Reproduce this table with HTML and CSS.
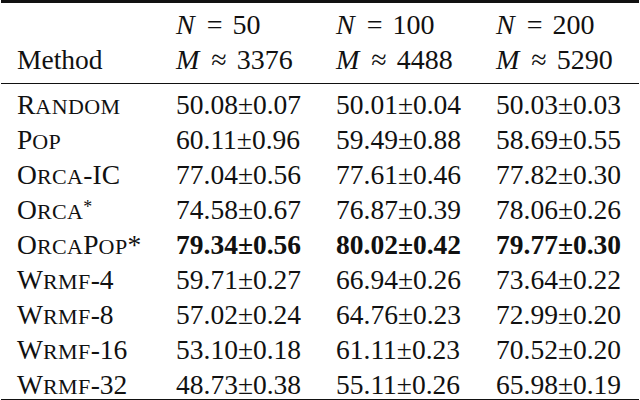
FILE: index.html
```html
<!DOCTYPE html>
<html lang="en">
<head>
    <meta charset="UTF-8">
    <meta name="viewport" content="width=device-width, initial-scale=1.0">
    <title>Method comparison</title>
    <link rel="stylesheet" href="styles.css">
</head>
<body>
    <table class="results">
        <colgroup>
            <col class="col-method">
            <col class="col-value">
            <col class="col-value">
            <col class="col-last">
        </colgroup>
        <thead>
            <tr class="head-top">
                <th class="method"></th>
                <th><i>N</i><span class="op">=</span>50</th>
                <th><i>N</i><span class="op">=</span>100</th>
                <th><i>N</i><span class="op">=</span>200</th>
            </tr>
            <tr class="head-bottom">
                <th class="method">Method</th>
                <th><i>M</i><span class="op">≈</span>3376</th>
                <th><i>M</i><span class="op">≈</span>4488</th>
                <th><i>M</i><span class="op">≈</span>5290</th>
            </tr>
        </thead>
        <tbody>
            <tr class="first">
                <td class="method">R<span class="sc">ANDOM</span></td>
                <td>50.08±0.07</td>
                <td>50.01±0.04</td>
                <td>50.03±0.03</td>
            </tr>
            <tr>
                <td class="method">P<span class="sc">OP</span></td>
                <td>60.11±0.96</td>
                <td>59.49±0.88</td>
                <td>58.69±0.55</td>
            </tr>
            <tr>
                <td class="method">O<span class="sc">RCA</span>-IC</td>
                <td>77.04±0.56</td>
                <td>77.61±0.46</td>
                <td>77.82±0.30</td>
            </tr>
            <tr>
                <td class="method">O<span class="sc">RCA</span><sup>*</sup></td>
                <td>74.58±0.67</td>
                <td>76.87±0.39</td>
                <td>78.06±0.26</td>
            </tr>
            <tr class="best">
                <td class="method">O<span class="sc">RCA</span>P<span class="sc">OP</span>*</td>
                <td>79.34±0.56</td>
                <td>80.02±0.42</td>
                <td>79.77±0.30</td>
            </tr>
            <tr>
                <td class="method">W<span class="sc">RMF</span>-4</td>
                <td>59.71±0.27</td>
                <td>66.94±0.26</td>
                <td>73.64±0.22</td>
            </tr>
            <tr>
                <td class="method">W<span class="sc">RMF</span>-8</td>
                <td>57.02±0.24</td>
                <td>64.76±0.23</td>
                <td>72.99±0.20</td>
            </tr>
            <tr>
                <td class="method">W<span class="sc">RMF</span>-16</td>
                <td>53.10±0.18</td>
                <td>61.11±0.23</td>
                <td>70.52±0.20</td>
            </tr>
            <tr class="last">
                <td class="method">W<span class="sc">RMF</span>-32</td>
                <td>48.73±0.38</td>
                <td>55.11±0.26</td>
                <td>65.98±0.19</td>
            </tr>
        </tbody>
    </table>
</body>
</html>
```

FILE: styles.css
```css
* {
    margin: 0;
    padding: 0;
    box-sizing: border-box;
}

body {
    background: white;
    color: #111;
    font-family: "Liberation Serif", "Times New Roman", serif;
    font-size: 27.5px;
}

.results {
    width: 638px;
    margin: 0 1px;
    table-layout: fixed;
    border-collapse: collapse;
    border-top: 3px solid #111;
    border-bottom: 2px solid #111;
}

.col-method {
    width: 175px;
}

.col-value {
    width: 160px;
}

.col-last {
    width: 143px;
}

.results th,
.results td {
    text-align: left;
    font-weight: normal;
    white-space: nowrap;
    padding: 0;
    height: 34.9px;
    line-height: 34.9px;
}

.results .method {
    padding-left: 16px;
}

.head-top th {
    padding-top: 5px;
    height: 39px;
}

.head-bottom th {
    height: 39px;
    padding-bottom: 5px;
    border-bottom: 1px solid #111;
}

.results thead th:not(.method) {
    font-size: 28px;
}

.results i {
    font-style: italic;
}

.op {
    padding: 0 10px 0 12px;
}

.sc {
    font-size: 0.8em;
    line-height: 1;
    letter-spacing: 0.4px;
}

.results sup {
    font-size: 0.65em;
    line-height: 0;
    vertical-align: 0.35em;
}

.first td {
    padding-top: 4.5px;
    height: 39.4px;
}

.results .last td {
    line-height: 28px;
    padding-top: 3.5px;
    height: 31.5px;
}

.best td:not(.method) {
    font-weight: bold;
}
```
